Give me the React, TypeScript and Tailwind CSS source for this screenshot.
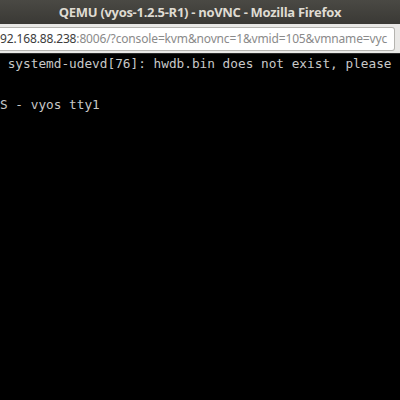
export default function App() {
  return (
    <div className="w-[400px] h-[400px] overflow-hidden bg-black flex flex-col">
      <div className="h-[24px] shrink-0 bg-gradient-to-b from-[#4a4944] to-[#3a3935] flex items-center justify-center">
        <span className="text-[13px] font-bold tracking-[-0.3px] text-[#dfdbd2] whitespace-nowrap leading-none" style={{ fontFamily: '"Open Sans", "Noto Sans", sans-serif' }}>
          QEMU (vyos-1.2.5-R1) - noVNC - Mozilla Firefox
        </span>
      </div>
      <div className="h-[30px] shrink-0 bg-[#e9e8e6] pt-[3px] pb-[2px] pr-[5px] border-b border-[#2b2b2b]">
        <div className="h-full bg-white border border-[#b5b4b0] border-l-0 rounded-r-[3px] flex items-center">
          <span className="whitespace-nowrap text-[12px] tracking-[-0.15px] text-[#8a8a8a]" style={{ fontFamily: '"Noto Sans", "Open Sans", sans-serif' }}>
            <span className="text-[#3c3c3c]">92.168.88.238</span>:8006/?console=kvm&amp;novnc=1&amp;vmid=105&amp;vmname=vyc
          </span>
        </div>
      </div>
      <div className="flex-1 bg-black text-[#c8c8c8] text-[12.75px] leading-[20.5px] whitespace-pre" style={{ fontFamily: '"DejaVu Sans Mono", monospace' }}>
        <div> systemd-udevd[76]: hwdb.bin does not exist, please</div>
        <div> </div>
        <div>S - vyos tty1</div>
      </div>
    </div>
  );
}
